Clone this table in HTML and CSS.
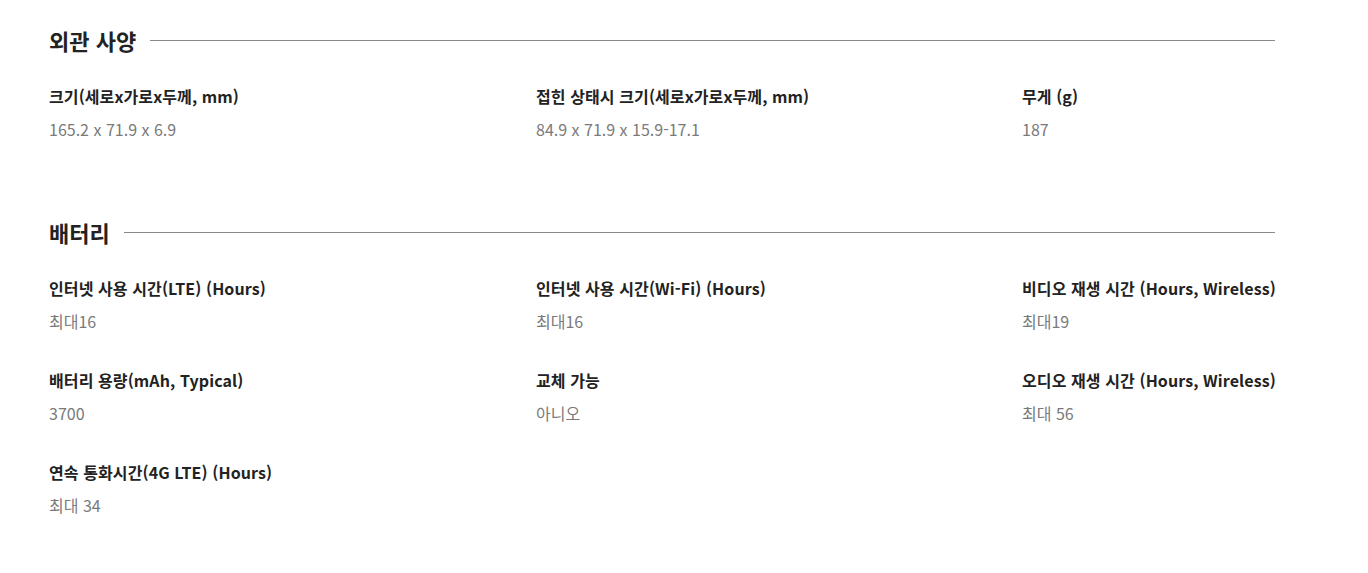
FILE: index.html
```html
<!DOCTYPE html>
<html lang="ko">
<head>
<meta charset="utf-8">
<link rel="stylesheet" href="styles.css">
</head>
<body>
<main class="specs">
  <section class="spec-section">
    <h2 class="spec-title"><span>외관 사양</span></h2>
    <div class="spec-grid">
      <div class="spec-item"><div class="spec-label">크기(세로x가로x두께, mm)</div><div class="spec-value">165.2 x 71.9 x 6.9</div></div>
      <div class="spec-item"><div class="spec-label">접힌 상태시 크기(세로x가로x두께, mm)</div><div class="spec-value">84.9 x 71.9 x 15.9-17.1</div></div>
      <div class="spec-item"><div class="spec-label">무게 (g)</div><div class="spec-value">187</div></div>
    </div>
  </section>
  <section class="spec-section">
    <h2 class="spec-title"><span>배터리</span></h2>
    <div class="spec-grid">
      <div class="spec-item"><div class="spec-label">인터넷 사용 시간(LTE) (Hours)</div><div class="spec-value">최대16</div></div>
      <div class="spec-item"><div class="spec-label">인터넷 사용 시간(Wi-Fi) (Hours)</div><div class="spec-value">최대16</div></div>
      <div class="spec-item"><div class="spec-label">비디오 재생 시간 (Hours, Wireless)</div><div class="spec-value">최대19</div></div>
      <div class="spec-item"><div class="spec-label">배터리 용량(mAh, Typical)</div><div class="spec-value">3700</div></div>
      <div class="spec-item"><div class="spec-label">교체 가능</div><div class="spec-value">아니오</div></div>
      <div class="spec-item"><div class="spec-label">오디오 재생 시간 (Hours, Wireless)</div><div class="spec-value">최대 56</div></div>
      <div class="spec-item"><div class="spec-label">연속 통화시간(4G LTE) (Hours)</div><div class="spec-value">최대 34</div></div>
    </div>
  </section>
</main>
</body>
</html>
```

FILE: styles.css
```css
html, body {
  margin: 0;
  padding: 0;
  background: #fff;
}
body {
  font-family: "Noto Sans CJK KR", "Noto Sans", sans-serif;
  color: #222;
}
.specs {
  width: 1226px;
  padding: 24px 0 0 49px;
}
.spec-section {
  margin-bottom: 75px;
}
.spec-title {
  display: flex;
  align-items: center;
  gap: 14px;
  margin: 0 0 28px 0;
  height: 32px;
  font-size: 22px;
  font-weight: 700;
  letter-spacing: 0;
  color: #222;
}
.spec-title::after {
  content: "";
  flex: 1;
  height: 1px;
  background: #8a8a8a;
}
.spec-grid {
  display: grid;
  grid-template-columns: 487px 486px 1fr;
  row-gap: 35px;
}
.spec-label {
  font-size: 16px;
  line-height: 24px;
  font-weight: 700;
  letter-spacing: 0.1px;
  color: #222;
  white-space: nowrap;
}
.spec-value {
  margin-top: 9px;
  font-size: 16px;
  line-height: 24px;
  font-weight: 400;
  color: #7a7a7a;
  letter-spacing: 0;
}
```
